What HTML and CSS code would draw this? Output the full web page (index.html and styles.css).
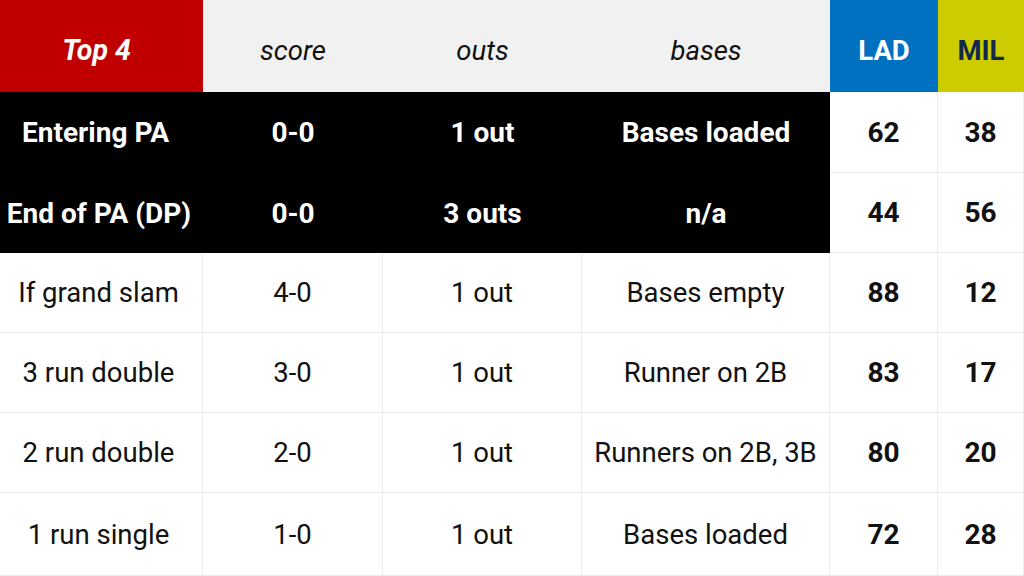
FILE: index.html
```html
<!DOCTYPE html>
<html>
<head>
<meta charset="utf-8">
<link rel="stylesheet" href="styles.css">
</head>
<body>
<div class="table">
  <div class="cell head title lead">Top 4</div>
  <div class="cell head">score</div>
  <div class="cell head">outs</div>
  <div class="cell head">bases</div>
  <div class="cell head team lad">LAD</div>
  <div class="cell head team mil">MIL</div>

  <div class="cell dark lead">Entering PA&nbsp;</div>
  <div class="cell dark">0-0</div>
  <div class="cell dark">1 out</div>
  <div class="cell dark">Bases loaded</div>
  <div class="cell num">62</div>
  <div class="cell num">38</div>

  <div class="cell dark lead">End of PA (DP)</div>
  <div class="cell dark">0-0</div>
  <div class="cell dark">3 outs</div>
  <div class="cell dark">n/a</div>
  <div class="cell num">44</div>
  <div class="cell num">56</div>

  <div class="cell lead">If grand slam</div>
  <div class="cell">4-0</div>
  <div class="cell">1 out</div>
  <div class="cell">Bases empty</div>
  <div class="cell num">88</div>
  <div class="cell num">12</div>

  <div class="cell lead">3 run double</div>
  <div class="cell">3-0</div>
  <div class="cell">1 out</div>
  <div class="cell">Runner on 2B</div>
  <div class="cell num">83</div>
  <div class="cell num">17</div>

  <div class="cell lead">2 run double</div>
  <div class="cell">2-0</div>
  <div class="cell">1 out</div>
  <div class="cell">Runners on 2B, 3B</div>
  <div class="cell num">80</div>
  <div class="cell num">20</div>

  <div class="cell lead">1 run single</div>
  <div class="cell">1-0</div>
  <div class="cell">1 out</div>
  <div class="cell">Bases loaded</div>
  <div class="cell num">72</div>
  <div class="cell num">28</div>
</div>
</body>
</html>
```
FILE: styles.css
```css
html, body {
  margin: 0;
  padding: 0;
  background: #fff;
}
body {
  font-family: Roboto, "Liberation Sans", sans-serif;
  color: #111;
  width: 1024px;
  height: 576px;
  overflow: hidden;
}
.table {
  display: grid;
  grid-template-columns: 203px 180px 199px 248px 108px 86px;
  grid-template-rows: 92px 81px 80px 80px 80px 80px 83px;
  width: 1024px;
}
.cell {
  display: flex;
  align-items: center;
  justify-content: center;
  font-size: 27.5px;
  box-sizing: border-box;
  border-right: 1px solid #ececec;
  border-bottom: 1px solid #ececec;
  white-space: pre;
}
.lead {
  padding-right: 5px;
}
.head {
  background: #f1f1f1;
  font-style: italic;
  font-size: 27.5px;
  border: none;
  padding-top: 8px;
  color: #111;
}
.title {
  background: #c00000;
  color: #fff;
  font-weight: 700;
  font-size: 28.5px;
  padding-right: 10px;
}
.team {
  font-style: normal;
  font-weight: 700;
}
.lad {
  background: #0070c0;
  color: #fff;
}
.mil {
  background: #cccc00;
  color: #13294b;
}
.dark {
  background: #000;
  color: #fff;
  font-weight: 700;
  font-size: 28px;
  border: none;
}
.num {
  font-weight: 700;
  font-size: 28px;
}
```
